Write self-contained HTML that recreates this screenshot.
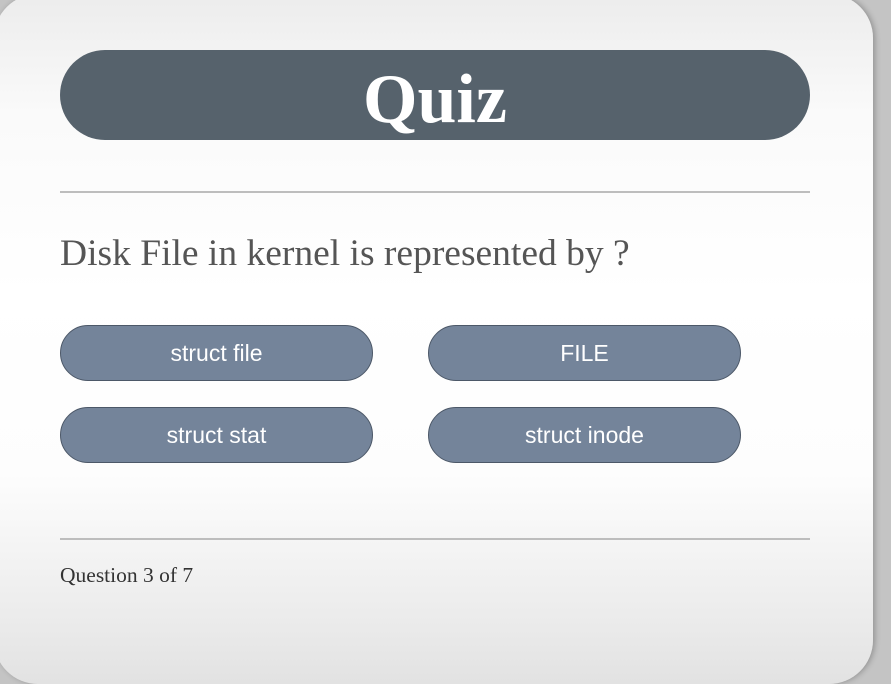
<!DOCTYPE html>
<html><head><style>
html,body{margin:0;padding:0;width:891px;height:683px;overflow:hidden;background:#c4c4c4;}
.card{position:absolute;left:-6px;top:-6px;width:879px;height:690px;border-radius:44px;
background:linear-gradient(#ececec 0px,#fafafa 120px,#fff 300px,#fdfdfd 480px,#ececec 620px,#e2e2e2 690px);
box-shadow:2px 0 6px rgba(0,0,0,.25);}
.head{position:absolute;left:60px;top:50px;width:750px;height:90px;border-radius:45px;background:#56626c;
color:#fff;font:bold 70px "Liberation Serif",serif;text-align:center;line-height:100px;}
.hr{position:absolute;left:60px;width:750px;height:2px;background:#bdbdbd;}
.q{position:absolute;left:60px;top:232px;font:37.5px "Liberation Serif",serif;color:#555;}
.b{position:absolute;width:311px;height:54px;border:1px solid #4c5868;border-radius:28px;background:#74849a;
color:#fff;font:23px "Liberation Sans",sans-serif;text-align:center;line-height:54px;}
.f{position:absolute;left:60px;top:563px;font:21.5px "Liberation Serif",serif;color:#333;}
</style></head><body>
<div class="card"></div>
<div class="head">Quiz</div>
<div class="hr" style="top:191px"></div>
<div class="q">Disk File in kernel is represented by ?</div>
<div class="b" style="left:60px;top:325px">struct file</div>
<div class="b" style="left:428px;top:325px">FILE</div>
<div class="b" style="left:60px;top:407px">struct stat</div>
<div class="b" style="left:428px;top:407px">struct inode</div>
<div class="hr" style="top:538px"></div>
<div class="f">Question 3 of 7</div>
</body></html>
